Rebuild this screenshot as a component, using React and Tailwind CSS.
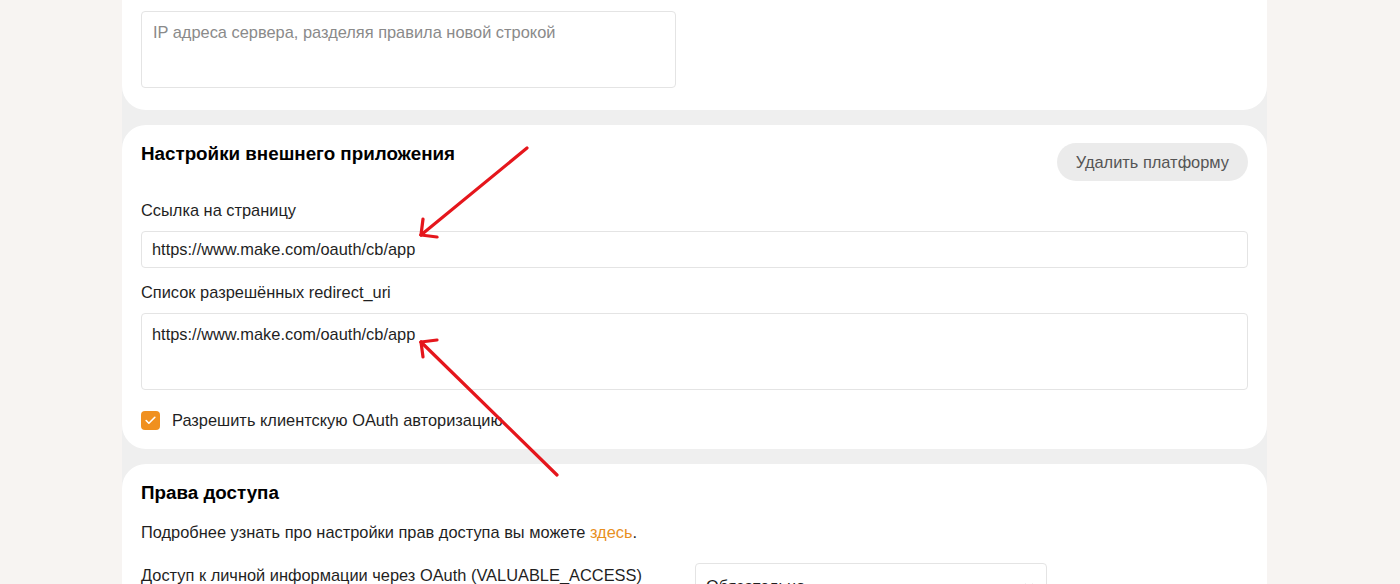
import { Check, ChevronDown } from 'lucide-react'

function Card({ className = '', children }) {
  return <div className={`bg-white rounded-[24px] px-[19px] ${className}`}>{children}</div>
}

function Arrows() {
  return (
    <svg className="absolute inset-0 pointer-events-none" width="1400" height="584" viewBox="0 0 1400 584">
      <g stroke="#e5161c" strokeWidth="3.2" strokeLinecap="round" fill="none">
        <path d="M527 148 L421 235" />
        <path d="M421 235 L423 219" />
        <path d="M421 235 L437 237" />
        <path d="M557 475 L421 342" />
        <path d="M421 342 L437 340" />
        <path d="M421 342 L423 357" />
      </g>
    </svg>
  )
}

export default function App() {
  return (
    <div
      className="relative w-[1400px] h-[584px] overflow-hidden bg-[#f7f4f2] text-[#1f1f1f]"
      style={{ fontFamily: '"Liberation Sans", Arial, sans-serif' }}
    >
      <div className="ml-[122px] w-[1145px] bg-[#efefef] flex flex-col gap-[15px] -mt-[40px] pb-[40px]">
        {/* Server IPs */}
        <Card className="pt-[51px] pb-[22px]">
          <div className="w-[535px] h-[77px] border border-[#e4e4e4] rounded-[4px] px-[11px] pt-[8px] text-[16.4px] leading-[24px] text-[#8a8a8a]">
            IP адреса сервера, разделяя правила новой строкой
          </div>
        </Card>

        {/* External app */}
        <Card className="pt-[18px] pb-[19px]">
          <div className="flex items-start justify-between">
            <h2 className="text-[18.8px] leading-[22px] font-bold text-black">Настройки внешнего приложения</h2>
            <button className="h-[38px] px-[19px] rounded-full bg-[#ebebeb] text-[16.4px] text-[#555]">
              Удалить платформу
            </button>
          </div>
          <div className="mt-[17px] text-[16.4px] leading-[24px]">Ссылка на страницу</div>
          <div className="mt-[9px] h-[37px] border border-[#e4e4e4] rounded-[4px] px-[10px] flex items-center text-[16.4px] text-[#1f1f1f]">
            https://www.make.com/oauth/cb/app
          </div>
          <div className="mt-[12px] text-[16.4px] leading-[24px]">Список разрешённых redirect_uri</div>
          <div className="mt-[9px] h-[77px] border border-[#e4e4e4] rounded-[4px] px-[10px] pt-[8px] text-[16.4px] leading-[24px]">
            https://www.make.com/oauth/cb/app
          </div>
          <label className="mt-[20px] flex items-center gap-[12px] text-[16.4px] leading-[20px]">
            <span className="w-[19px] h-[19px] rounded-[4px] bg-[#f0901f] flex items-center justify-center">
              <Check className="w-[13px] h-[13px] text-white" strokeWidth={3} />
            </span>
            Разрешить клиентскую OAuth авторизацию
          </label>
        </Card>

        {/* Access rights */}
        <Card className="pt-[18px] pb-[30px]">
          <h2 className="text-[18.8px] leading-[22px] font-bold text-black">Права доступа</h2>
          <p className="mt-[16px] text-[16.4px] leading-[24px]">
            Подробнее узнать про настройки прав доступа вы можете{' '}
            <span className="text-[#e8901f]">здесь</span>.
          </p>
          <div className="mt-[19px] flex items-start">
            <div className="w-[554px] text-[16.4px] leading-[24px]">
              Доступ к личной информации через OAuth (VALUABLE_ACCESS)
            </div>
            <div className="w-[352px] h-[40px] border border-[#e4e4e4] rounded-[4px] px-[10px] flex items-center justify-between text-[16.4px] pt-[6px]">
              <span>Обязательно</span>
              <ChevronDown className="w-[14px] h-[14px] text-[#c4c4c4]" />
            </div>
          </div>
        </Card>
      </div>
      <Arrows />
    </div>
  )
}
